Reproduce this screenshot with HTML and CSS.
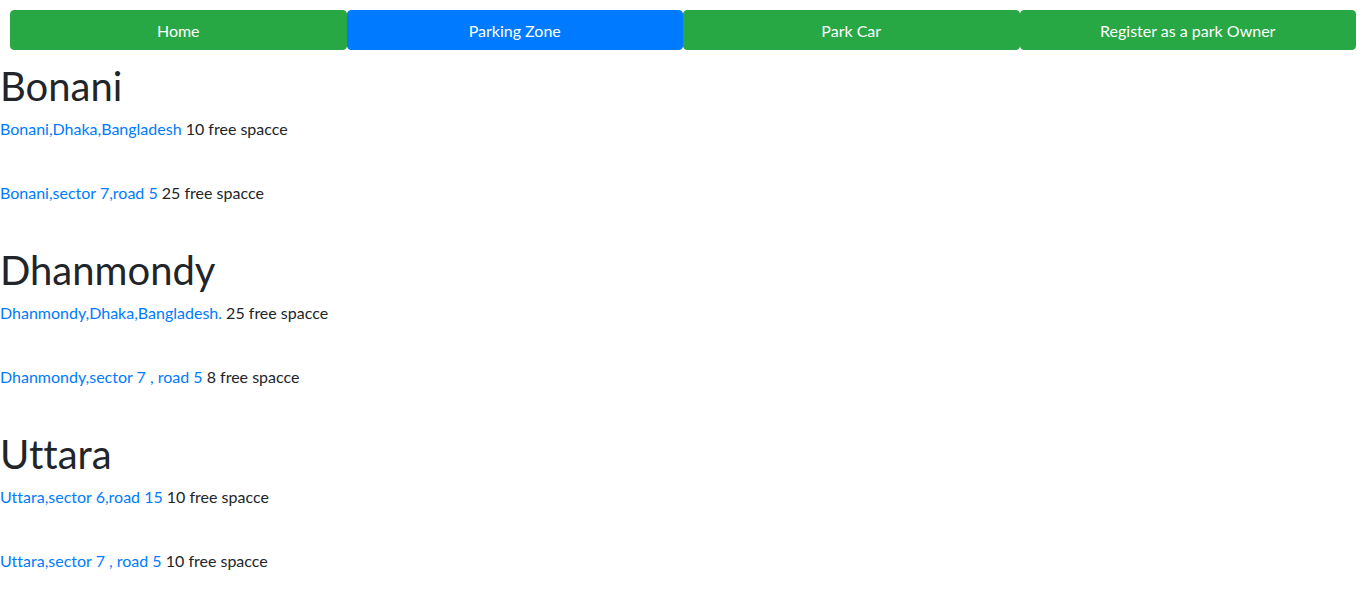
FILE: index.html
```html
<!DOCTYPE html>
<html lang="en">
<head>
<meta charset="utf-8">
<title>Parking Zone</title>
<link rel="stylesheet" href="styles.css">
</head>
<body>
<nav class="nav">
  <a class="btn btn-green" href="#">Home</a>
  <a class="btn btn-blue" href="#">Parking Zone</a>
  <a class="btn btn-green" href="#">Park Car</a>
  <a class="btn btn-green" href="#">Register as a park Owner</a>
</nav>
<main class="zones">
  <section class="zone">
    <h1 class="zone-title">Bonani</h1>
    <p class="spot"><a href="#">Bonani,Dhaka,Bangladesh</a> 10 free spacce</p>
    <p class="spot"><a href="#">Bonani,sector 7,road 5</a> 25 free spacce</p>
  </section>
  <section class="zone">
    <h1 class="zone-title">Dhanmondy</h1>
    <p class="spot"><a href="#">Dhanmondy,Dhaka,Bangladesh.</a> 25 free spacce</p>
    <p class="spot"><a href="#">Dhanmondy,sector 7 , road 5</a> 8 free spacce</p>
  </section>
  <section class="zone">
    <h1 class="zone-title">Uttara</h1>
    <p class="spot"><a href="#">Uttara,sector 6,road 15</a> 10 free spacce</p>
    <p class="spot"><a href="#">Uttara,sector 7 , road 5</a> 10 free spacce</p>
  </section>
</main>
</body>
</html>
```
FILE: styles.css
```css
* { box-sizing: border-box; }
html, body {
  margin: 0;
  padding: 0;
  background: #fff;
}
body {
  font-family: "Segoe UI", Lato, "Noto Sans", sans-serif;
  font-size: 16px;
  line-height: 1.5;
  color: #212529;
  font-variant-ligatures: none;
  font-feature-settings: "liga" 0, "clig" 0;
}
.nav {
  display: grid;
  grid-template-columns: repeat(4, 1fr);
  padding: 10px 10px 0 10px;
}
.btn {
  display: block;
  height: 40px;
  line-height: 24px;
  padding: 8px 12px 6px;
  text-align: center;
  color: #fff;
  text-decoration: none;
  border-radius: 4px;
  border: 1px solid transparent;
}
.btn-green { background: #28a745; border-color: #28a745; }
.btn-blue { background: #007bff; border-color: #007bff; }
.zones {
  padding-top: 11px;
}
.zone-title {
  margin: 0 0 7px 0;
  padding-top: 1px;
  font-size: 40px;
  font-weight: 400;
  line-height: 48px;
}
.spot {
  margin: 0 0 40px 0;
}
.spot a {
  color: #007bff;
  text-decoration: none;
}
```
